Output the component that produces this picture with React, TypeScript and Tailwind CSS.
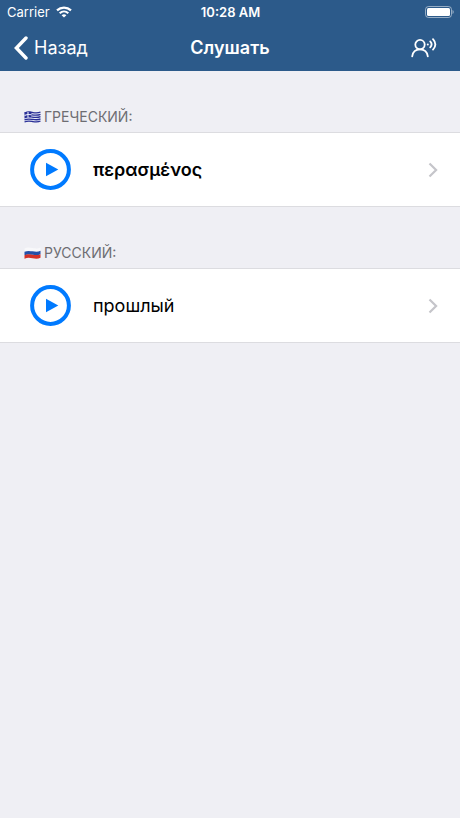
import type { ReactNode } from 'react'

type Entry = {
  id: string
  label: string
  flag: ReactNode
  word: string
  bold?: boolean
}

function WifiIcon() {
  return (
    <svg className="w-4 h-3" viewBox="0 0 16 12" fill="none" stroke="white" strokeWidth="2.2" aria-hidden="true">
      <path d="M1 4.4C5 .6 11 .6 15 4.4" />
      <path d="M3.7 7.2c2.5-2.3 6.1-2.3 8.6 0" />
      <path d="M8 11.6 5.6 9.2c1.4-1.2 3.4-1.2 4.8 0z" fill="white" stroke="none" />
    </svg>
  )
}

function BatteryIcon() {
  return (
    <svg className="w-[29px] h-3" viewBox="0 0 29 12" aria-hidden="true">
      <rect x=".5" y=".5" width="26" height="11" rx="3" fill="none" stroke="white" strokeOpacity=".5" />
      <rect x="2" y="2" width="23" height="8" rx="1.5" fill="white" />
      <path d="M27.5 4c1.6.6 1.6 3.4 0 4z" fill="white" fillOpacity=".5" />
    </svg>
  )
}

function BackIcon() {
  return (
    <svg className="w-[14px] h-6" viewBox="0 0 14 24" fill="none" stroke="white" strokeWidth="3.4" strokeLinecap="round" aria-hidden="true">
      <path d="M12 2 2.4 12 12 22" />
    </svg>
  )
}

function VoiceIcon() {
  return (
    <svg className="w-[26px] h-5" viewBox="0 0 26 20" fill="none" stroke="white" strokeWidth="1.8" strokeLinecap="round" aria-hidden="true">
      <circle cx="9" cy="6.6" r="4.7" />
      <path d="M1.2 18.4c.6-4.6 3.6-7 7.8-7s7.2 2.4 7.8 7" />
      <circle cx="16.8" cy="6.4" r="1" fill="white" stroke="none" />
      <path d="M19.2 3.4c1.7 1.8 1.7 4.2 0 6" />
      <path d="M22 1.2c2.9 3.2 2.9 7.2 0 10.4" />
    </svg>
  )
}

function PlayIcon() {
  return (
    <svg className="w-[41px] h-[41px]" viewBox="0 0 41 41" aria-hidden="true">
      <circle cx="20.5" cy="20.5" r="18.4" fill="none" stroke="#007aff" strokeWidth="4" />
      <path d="M16 13.7v13.6l12.3-6.8z" fill="#007aff" />
    </svg>
  )
}

function ChevronIcon() {
  return (
    <svg className="w-[10px] h-4" viewBox="0 0 10 16" fill="none" stroke="#c5c5ca" strokeWidth="2.2" aria-hidden="true">
      <path d="m1.5 1.5 6.6 6.5-6.6 6.5" />
    </svg>
  )
}

function GreekFlag() {
  return (
    <svg className="w-[17px] h-3" viewBox="0 0 17 12" aria-hidden="true">
      <path d="M.5 1.5c3-1.4 5.4-.9 8-.5s5.3.9 8-.5v10c-2.7 1.4-5.4.9-8 .5s-5-.9-8 .5z" fill="#e9edf8" />
      <g fill="none" stroke="#2a2f96" strokeWidth="1.3">
        <path d="M.5 2c3-1.4 5.4-.9 8-.5s5.3.9 8-.5" />
        <path d="M7.5 3.8c3 .4 6 .9 9-.5" />
        <path d="M7.5 6.1c3 .4 6 .9 9-.5" />
        <path d="M.5 8.9c3-1.4 5.4-.9 8-.5s5.3.9 8-.5" />
        <path d="M.5 11c3-1.4 5.4-.9 8-.5s5.3.9 8-.5" />
      </g>
      <path d="M.5 1.5c2.5-1.1 4.7-1 7-.7v6c-2.3-.3-4.5-.4-7 .7z" fill="#2a2f96" />
      <path d="M4 .9v5.8M.5 4.4c2.5-1.1 4.7-1 7-.7" fill="none" stroke="#e9edf8" strokeWidth="1.1" />
    </svg>
  )
}

function RussianFlag() {
  return (
    <svg className="w-[17px] h-3" viewBox="0 0 17 12" aria-hidden="true">
      <path d="M.5 1.5c3-1.4 5.4-.9 8-.5s5.3.9 8-.5V4c-2.7 1.4-5.4.9-8 .5s-5-.9-8 .5z" fill="#f8f8fa" />
      <path d="M.5 4.8c3-1.4 5.4-.9 8-.5s5.3.9 8-.5v3.5c-2.7 1.4-5.4.9-8 .5s-5-.9-8 .5z" fill="#2450a8" />
      <path d="M.5 8.2c3-1.4 5.4-.9 8-.5s5.3.9 8-.5v3.6c-2.7 1.4-5.4.9-8 .5s-5-.9-8 .5z" fill="#d33228" />
    </svg>
  )
}

const entries: Entry[] = [
  { id: 'el', label: 'ГРЕЧЕСКИЙ:', flag: <GreekFlag />, word: 'περασμένος', bold: true },
  { id: 'ru', label: 'РУССКИЙ:', flag: <RussianFlag />, word: 'прошлый' },
]

function Section({ entry }: { entry: Entry }) {
  return (
    <section aria-labelledby={entry.id}>
      <h2 id={entry.id} className="flex items-center gap-[3px] px-6 pt-9 pb-[5px] text-sm text-[#6d6d72]">
        {entry.flag}
        {entry.label}
      </h2>
      <button type="button" className="flex w-full items-center border-y border-[#dcdce0] bg-white py-4 pr-[22px] pl-[30px] text-left">
        <PlayIcon />
        <span className={`ml-[22px] flex-1 text-[18px] leading-6 text-black ${entry.bold ? 'font-semibold' : ''}`}>
          {entry.word}
        </span>
        <ChevronIcon />
      </button>
    </section>
  )
}

export default function App() {
  return (
    <div className="min-h-screen bg-[#efeff4] font-['Inter','Noto_Sans',sans-serif]">
      <header className="bg-[#2c5a8a] text-white">
        <div className="grid grid-cols-3 items-center pr-1.5 pl-[7px] text-[13px] leading-6">
          <span className="flex items-center gap-1.5">
            Carrier
            <WifiIcon />
          </span>
          <span className="text-center font-semibold">10:28 AM</span>
          <span className="flex justify-end">
            <BatteryIcon />
          </span>
        </div>
        <nav className="grid h-[47px] grid-cols-3 items-center px-[14px]">
          <button type="button" className="flex items-center gap-1.5 text-[18px] leading-6">
            <BackIcon />
            Назад
          </button>
          <h1 className="text-center text-[18px] leading-6 font-semibold">Слушать</h1>
          <button type="button" aria-label="Голос" className="justify-self-end pr-[9px]">
            <VoiceIcon />
          </button>
        </nav>
      </header>
      <main>
        {entries.map(e => (
          <Section key={e.id} entry={e} />
        ))}
      </main>
    </div>
  )
}
